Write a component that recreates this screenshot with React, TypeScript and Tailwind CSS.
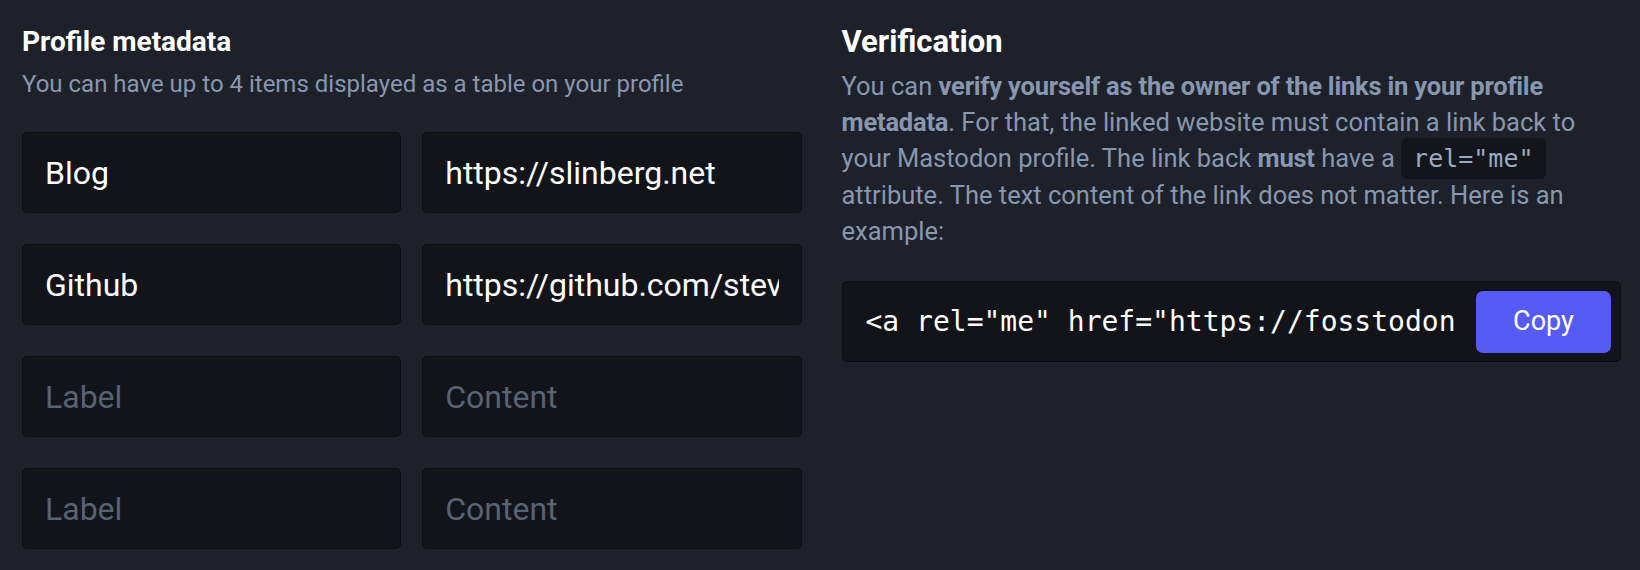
import React from "react";

const rows = [
  { label: "Blog", content: "https://slinberg.net" },
  { label: "Github", content: "https://github.com/stevelinberg" },
  { label: "", content: "" },
  { label: "", content: "" },
];

const inputCls =
  "w-full h-[81px] rounded-[5px] border border-[#0c0d11] bg-[#131419] px-[22px] text-[32px] text-white placeholder:text-[#586274] outline-none";

export default function App() {
  return (
    <div
      className="min-h-[570px] w-full bg-[#1e212a] pl-[22px] pr-[19px] pt-[26px] grid grid-cols-2 gap-x-[40px]"
      style={{ fontFamily: "Roboto, 'Noto Sans', sans-serif" }}
    >
      <div>
        <h3 className="text-[28px] leading-[32px] font-bold text-white">Profile metadata</h3>
        <p className="mt-[8px] text-[24px] leading-[36px] text-[#8797b0]">
          You can have up to 4 items displayed as a table on your profile
        </p>
        <div className="mt-[30px] flex flex-col gap-[31px]">
          {rows.map((r, i) => (
            <div key={i} className="grid grid-cols-2 gap-[21px]">
              <input className={inputCls} defaultValue={r.label} placeholder="Label" />
              <input className={inputCls} defaultValue={r.content} placeholder="Content" />
            </div>
          ))}
        </div>
      </div>

      <div>
        <h3 className="text-[31px] leading-[32px] font-bold text-white">Verification</h3>
        <p className="mt-[10px] text-[25.5px] leading-[36px] text-[#8797b0]">
          You can{" "}
          <strong className="font-bold tracking-[-0.2px]">
            verify yourself as the owner of the links in your profile metadata
          </strong>
          . For that, the linked website must contain a link back to your Mastodon profile. The link back{" "}
          <strong className="font-bold tracking-[-0.2px]">must</strong> have a{" "}
          <code
            className="rounded-[6px] bg-[#13151a] px-[12px] py-[6px] text-[25px] text-[#9aaac2]"
            style={{ fontFamily: "'DejaVu Sans Mono', monospace" }}
          >
            rel="me"
          </code>{" "}
          attribute. The text content of the link does not matter. Here is an example:
        </p>
        <div className="mt-[32px] flex h-[81px] items-center rounded-[5px] border border-[#0c0d11] bg-[#131419]">
          <input
            readOnly
            className="min-w-0 flex-1 bg-transparent pl-[23px] pr-[20px] text-[28px] text-white outline-none"
            style={{ fontFamily: "'DejaVu Sans Mono', monospace" }}
            value={'<a rel="me" href="https://fosstodon.org/@slinberg">Mastodon</a>'}
          />
          <button className="mr-[9px] h-[62px] w-[135px] shrink-0 rounded-[7px] bg-[#575bf6] text-[27px] font-normal text-white">
            Copy
          </button>
        </div>
      </div>
    </div>
  );
}
